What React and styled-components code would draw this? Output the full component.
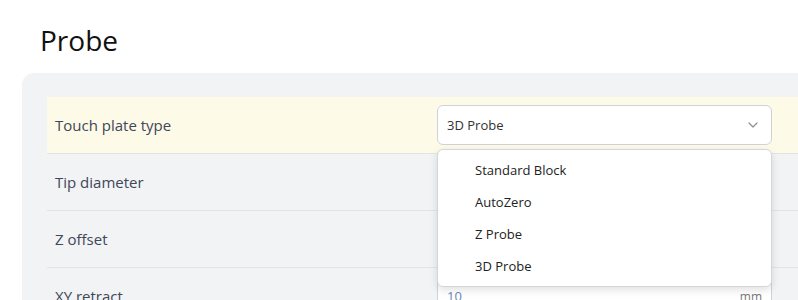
import React, { useState } from 'react';
import styled, { createGlobalStyle } from 'styled-components';

const GlobalStyle = createGlobalStyle`
  body {
    margin: 0;
    background: #ffffff;
    font-family: 'Open Sans', 'Noto Sans', sans-serif;
    overflow: hidden;
  }
`;

const fields = [
  { label: 'Touch plate type', kind: 'select' },
  { label: 'Tip diameter', kind: 'number', value: '2', unit: 'mm' },
  { label: 'Z offset', kind: 'number', value: '0', unit: 'mm' },
  { label: 'XY retract', kind: 'number', value: '10', unit: 'mm' },
];

const options = ['Standard Block', 'AutoZero', 'Z Probe', '3D Probe'];

function Chevron() {
  return (
    <svg width="10" height="6" viewBox="0 0 10 6" fill="none">
      <path d="M1 1l4 4 4-4" stroke="#8a8f99" strokeWidth="1.2" strokeLinecap="round" strokeLinejoin="round" />
    </svg>
  );
}

function App() {
  const [value, setValue] = useState('3D Probe');

  return (
    <Page>
      <GlobalStyle />
      <Title>Probe</Title>
      <Panel>
        {fields.map((f, i) => (
          <Row key={f.label} $active={i === 0}>
            <Label>{f.label}</Label>
            <Control>
              {f.kind === 'select' ? (
                <>
                  <SelectBox>
                    <span>{value}</span>
                    <Chevron />
                  </SelectBox>
                  <Menu>
                    {options.map((o) => (
                      <MenuItem key={o} onClick={() => setValue(o)}>
                        {o}
                      </MenuItem>
                    ))}
                  </Menu>
                </>
              ) : (
                <NumberBox>
                  <span>{f.value}</span>
                  <Unit>{f.unit}</Unit>
                </NumberBox>
              )}
            </Control>
          </Row>
        ))}
      </Panel>
    </Page>
  );
}

const Page = styled.div`
  padding: 20px 0 0 22px;
  width: 1000px;
`;

const Title = styled.h1`
  margin: 0 0 13px 18px;
  font-size: 28px;
  font-weight: 400;
  line-height: 40px;
  color: #111;
`;

const Panel = styled.div`
  background: #f2f3f5;
  border-radius: 12px;
  padding: 24px 0 24px 25px;
`;

const Row = styled.div`
  display: flex;
  align-items: center;
  height: 56px;
  padding-left: 8px;
  border-bottom: 1px solid #e1e3e7;
  background: ${(p) => (p.$active ? '#fdfae8' : 'transparent')};
  position: relative;
  z-index: ${(p) => (p.$active ? 2 : 1)};
`;

const Label = styled.div`
  width: 382px;
  font-size: 15px;
  color: #3f4759;
`;

const Control = styled.div`
  position: relative;
  width: 335px;
`;

const SelectBox = styled.div`
  display: flex;
  align-items: center;
  justify-content: space-between;
  box-sizing: border-box;
  height: 40px;
  padding: 0 13px 0 9px;
  background: #fff;
  border: 1px solid #cfd2d8;
  border-radius: 6px;
  font-size: 13px;
  color: #333;
`;

const Menu = styled.div`
  position: absolute;
  top: 44px;
  left: 0;
  right: 0;
  box-sizing: border-box;
  padding: 4px 0;
  background: #fff;
  border: 1px solid #d3d6dc;
  border-radius: 6px;
  box-shadow: 0 3px 8px rgba(0, 0, 0, 0.12);
`;

const MenuItem = styled.div`
  height: 32px;
  line-height: 32px;
  padding-left: 37px;
  font-size: 13px;
  color: #222;
  cursor: pointer;
`;

const NumberBox = styled.div`
  display: flex;
  align-items: center;
  justify-content: space-between;
  box-sizing: border-box;
  height: 40px;
  padding: 0 9px;
  background: #fff;
  border: 1px solid #cfd2d8;
  border-radius: 6px;
  font-size: 13px;
  color: #6b85b5;
`;

const Unit = styled.span`
  font-size: 12px;
  color: #777;
`;

export default App;
